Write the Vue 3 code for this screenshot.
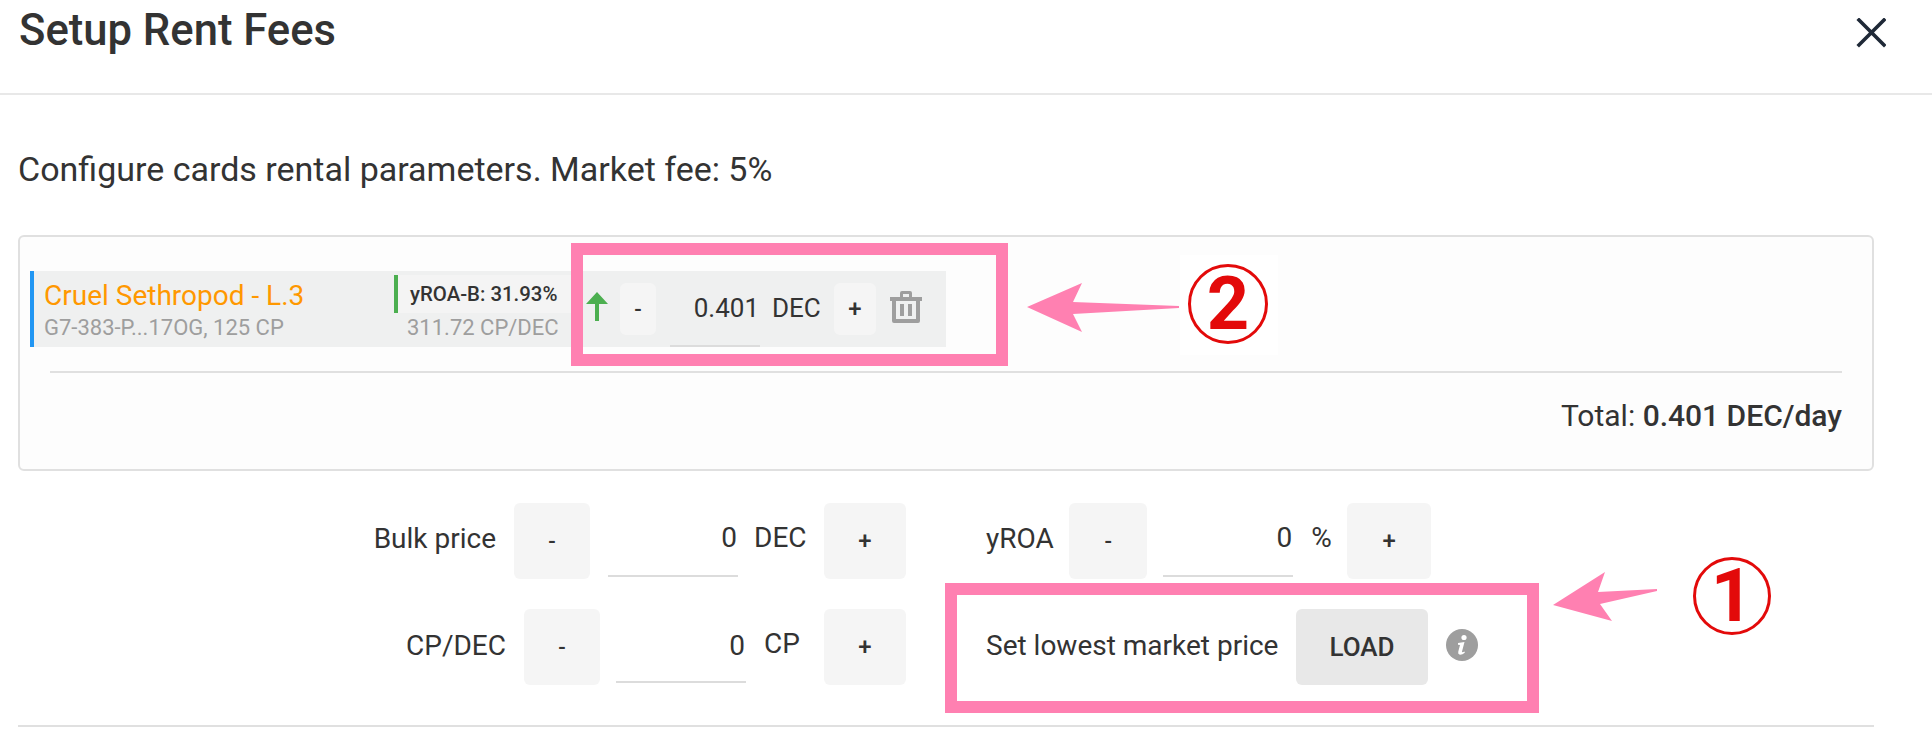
<template>
	<div class="page">
		<header class="modal-header">
			<h2 class="modal-title">Setup Rent Fees</h2>
			<svg class="close-icon" width="30" height="30" viewBox="0 0 30 30">
				<path d="M3 2 L28 27 M28 2 L3 27" stroke="#1f2937" stroke-width="3.6" fill="none" stroke-linecap="square" />
			</svg>
		</header>

		<section class="modal-body">
			<p class="intro">Configure cards rental parameters. Market fee: 5%</p>

			<div class="cards-box">
				<div class="card-row">
					<div class="card-info">
						<div class="card-name">Cruel Sethropod - L.3</div>
						<div class="card-sub">G7-383-P...17OG, 125 CP</div>
					</div>
					<div class="card-stats">
						<div class="stat-main">yROA-B: 31.93%</div>
						<div class="stat-sub">311.72 CP/DEC</div>
					</div>
					<svg class="trend-icon" width="22" height="29" viewBox="0 0 22 29">
						<path d="M11 0 L22 12 L13 12 L13 29 L9 29 L9 12 L0 12 Z" fill="#4caf50" />
					</svg>
					<button class="step step-small step-minus">-</button>
					<div class="row-input">0.401</div>
					<span class="row-unit">DEC</span>
					<button class="step step-small step-plus">+</button>
					<svg class="trash-icon" width="32" height="32" viewBox="0 0 32 32">
						<path fill="#9e9e9e" fill-rule="evenodd" d="M10 6 V2 Q10 0 12 0 H20 Q22 0 22 2 V6 H32 V10 H30 V30 Q30 32 28 32 H4 Q2 32 2 30 V10 H0 V6 Z M13 3 V6 H19 V3 Z M6 10 V28 H26 V10 Z" />
						<path fill="#9e9e9e" d="M10 13 H14 V25 H10 Z M18 13 H22 V25 H18 Z" />
					</svg>
				</div>
				<div class="total">Total: <strong>0.401 DEC/day</strong></div>
			</div>

			<div class="bulk-grid">
				<div v-for="field in fields" :key="field.label" class="field" :class="field.cls">
					<span class="field-label">{{ field.label }}</span>
					<button class="step step-minus-big">-</button>
					<div class="field-input">0</div>
					<span class="field-unit">{{ field.unit }}</span>
					<button class="step step-plus-big">+</button>
				</div>
				<div class="field market">
					<span class="field-label">Set lowest market price</span>
					<button class="load-btn">LOAD</button>
					<svg class="info-icon" width="32" height="32" viewBox="0 0 32 32">
						<circle cx="16" cy="16" r="16" fill="#9e9e9e" />
						<circle cx="18" cy="8.5" r="2.6" fill="#fff" />
						<path d="M12 14 L18.5 13 L16 22.5 Q15.8 24 18.5 22.6 L18.8 23.8 Q16 26 13.4 25.6 Q11.6 25 12.3 22.6 L14 16 L12 15.8 Z" fill="#fff" />
					</svg>
				</div>
			</div>
			<div class="bottom-line"></div>
		</section>

		<!-- pink annotations drawn over the screenshot -->
		<div class="mark mark-row"></div>
		<div class="mark mark-market"></div>
		<svg class="arrows" width="1932" height="732" viewBox="0 0 1932 732">
			<polygon points="1027,307 1082,283 1073,302 1179,306 1179,308 1073,314 1082,332" fill="#ff80b1" />
			<polygon points="1553,605 1605,572 1598,592 1657,589 1657,591 1600,604 1612,621" fill="#ff80b1" />
		</svg>
		<div class="badge-bg"></div>
		<div class="badge badge-two">2</div>
		<div class="badge badge-one">1</div>
	</div>
</template>

<script setup>
const fields = [
	{ label: 'Bulk price', unit: 'DEC', cls: 'bulk' },
	{ label: 'yROA', unit: '%', cls: 'yroa' },
	{ label: 'CP/DEC', unit: 'CP', cls: 'cpdec' },
]
</script>

<style>
html,
body {
	margin: 0;
	background: #fff;
}
</style>

<style scoped>
.page {
	position: relative;
	width: 1932px;
	height: 732px;
	overflow: hidden;
	background: #fff;
	color: #333;
	font-family: Roboto, "Liberation Sans", sans-serif;
}

.modal-header {
	display: flex;
	align-items: flex-start;
	justify-content: space-between;
	height: 93px;
	padding: 0 46px 0 19px;
	border-bottom: 2px solid #e8e8e8;
}

.modal-title {
	margin: 8px 0 0;
	font-size: 43.6px;
	line-height: 46px;
	font-weight: 500;
	color: #333;
}

.close-icon {
	margin-top: 18px;
}

.modal-body {
	padding: 0 58px 0 18px;
}

.intro {
	margin: 0;
	padding-top: 54px;
	font-size: 34px;
	line-height: 40px;
	height: 86px;
}

.cards-box {
	box-sizing: border-box;
	height: 236px;
	padding: 34px 30px 0 10px;
	border: 2px solid #e0e0e0;
	border-radius: 6px;
	background: #fdfdfd;
}

.card-row {
	display: flex;
	align-items: flex-start;
	box-sizing: border-box;
	width: 916px;
	height: 76px;
	border-left: 4px solid #2196f3;
	background: #eff0f0;
}

.card-info {
	width: 350px;
	padding: 9px 0 0 10px;
}

.card-name {
	font-size: 28px;
	line-height: 32px;
	color: #ff9800;
}

.card-sub {
	font-size: 22px;
	line-height: 32px;
	color: #9e9e9e;
}

.card-stats {
	width: 192px;
	padding-top: 4px;
}

.stat-main {
	box-sizing: border-box;
	width: 180px;
	height: 38px;
	padding-left: 12px;
	border-left: 4px solid #4caf50;
	background: #f4f4f4;
	font-size: 20.4px;
	font-weight: 500;
	line-height: 38px;
	white-space: nowrap;
}

.stat-sub {
	padding-left: 13px;
	font-size: 22px;
	line-height: 30px;
	color: #9e9e9e;
	white-space: nowrap;
}

.trend-icon {
	margin: 21px 12px 0 0;
}

.step {
	border: 0;
	border-radius: 6px;
	background: #f5f5f5;
	color: #333;
	font-family: inherit;
	font-size: 22px;
	font-weight: 500;
	padding: 0;
	flex: none;
}

.step-small {
	height: 52px;
	margin-top: 12px;
}

.step-minus {
	width: 36px;
}

.step-plus {
	width: 42px;
	margin-left: 14px;
	font-size: 24px;
}

.row-input {
	box-sizing: border-box;
	width: 90px;
	height: 76px;
	margin-left: 14px;
	padding: 0 1px 0 0;
	border-bottom: 2px solid #dcdcdc;
	font-size: 26px;
	line-height: 74px;
	text-align: right;
}

.row-unit {
	margin-left: 12px;
	width: 48px;
	font-size: 26px;
	line-height: 74px;
}

.trash-icon {
	margin: 20px 0 0 14px;
}

.total {
	margin: 24px 0 0 20px;
	padding-top: 23px;
	border-top: 2px solid #e0e0e0;
	font-size: 30px;
	line-height: 40px;
	text-align: right;
}

.total strong {
	font-weight: 500;
}

.bulk-grid {
	display: grid;
	grid-template-columns: 888px 1fr;
	column-gap: 80px;
	row-gap: 30px;
	padding-top: 32px;
}

.field {
	display: flex;
	align-items: center;
	height: 76px;
	font-size: 28px;
}

.field-label {
	margin-top: -3px;
}

.bulk .field-label {
	margin-top: -6px;
}

.bulk,
.cpdec {
	justify-content: flex-end;
}

.step-minus-big {
	width: 76px;
	height: 76px;
	margin-left: 18px;
}

.step-plus-big {
	width: 82px;
	height: 76px;
	font-size: 24px;
}

.field-input {
	box-sizing: border-box;
	width: 130px;
	height: 74px;
	margin-left: 18px;
	padding-right: 1px;
	border-bottom: 2px solid #dcdcdc;
	align-self: flex-start;
	line-height: 70px;
	text-align: right;
}

.field-unit {
	margin-left: 16px;
	width: 70px;
	line-height: 70px;
	align-self: flex-start;
}

.cpdec .field-input {
	margin-left: 16px;
	line-height: 74px;
}

.cpdec .field-unit {
	margin-left: 18px;
	width: 60px;
}

.yroa .field-label {
	margin-top: -6px;
}

.yroa .step-minus-big {
	width: 78px;
	margin-left: 15.5px;
}

.yroa .field-input {
	margin-left: 16px;
}

.yroa .field-unit {
	margin-left: 18px;
	width: 36px;
}

.yroa .step-plus-big {
	width: 84px;
}

.market .field-label {
	width: 291px;
	white-space: nowrap;
}

.load-btn {
	width: 132px;
	height: 76px;
	margin-left: 19px;
	border: 0;
	border-radius: 6px;
	background: #e8e8e8;
	color: #333;
	font-family: inherit;
	font-size: 26px;
	font-weight: 500;
}

.info-icon {
	margin: -4px 0 0 18px;
}

.bottom-line {
	height: 2px;
	margin-top: 40px;
	background: #e0e0e0;
}

.mark {
	position: absolute;
	box-sizing: border-box;
	border: 12.5px solid #ff80b1;
}

.mark-row {
	left: 571px;
	top: 243px;
	width: 437px;
	height: 123px;
}

.mark-market {
	left: 945px;
	top: 583px;
	width: 594px;
	height: 130px;
}

.arrows {
	position: absolute;
	left: 0;
	top: 0;
}

.badge-bg {
	position: absolute;
	left: 1180px;
	top: 255px;
	width: 98px;
	height: 100px;
	background: #fff;
}

.badge {
	position: absolute;
	display: flex;
	align-items: center;
	justify-content: center;
	box-sizing: border-box;
	width: 80px;
	height: 80px;
	border: 3.6px solid #e30a0a;
	border-radius: 50%;
	color: #e30a0a;
	font-size: 74px;
	font-weight: 700;
	line-height: 1;
}

.badge-two {
	left: 1188px;
	top: 264px;
}

.badge-one {
	left: 1693px;
	top: 557px;
	width: 78px;
	height: 78px;
}
</style>
